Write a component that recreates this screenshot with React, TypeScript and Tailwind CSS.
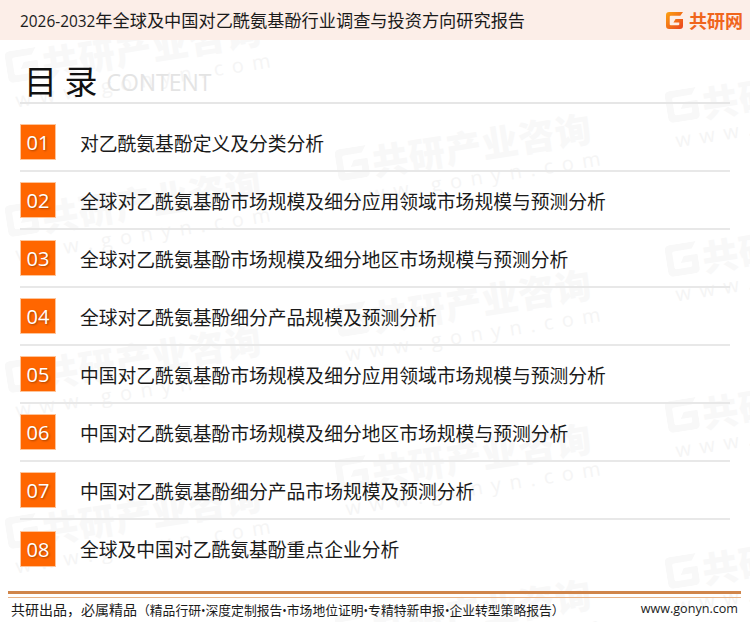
const CJK = "font-['Noto_Sans_CJK_SC','Noto_Sans',sans-serif]";

const items = [
  "对乙酰氨基酚定义及分类分析",
  "全球对乙酰氨基酚市场规模及细分应用领域市场规模与预测分析",
  "全球对乙酰氨基酚市场规模及细分地区市场规模与预测分析",
  "全球对乙酰氨基酚细分产品规模及预测分析",
  "中国对乙酰氨基酚市场规模及细分应用领域市场规模与预测分析",
  "中国对乙酰氨基酚市场规模及细分地区市场规模与预测分析",
  "中国对乙酰氨基酚细分产品市场规模及预测分析",
  "全球及中国对乙酰氨基酚重点企业分析",
];

const marks = [
  [3, 46], [3, 200], [3, 356], [3, 512],
  [333, 144], [333, 300], [333, 454], [333, 610],
  [663, 86], [663, 240], [663, 396], [663, 552],
];

const G_PATH =
  "M3 0H16L13.5 3.5H4.5Q3.5 3.5 3.5 4.5V11.5Q3.5 12.5 4.5 12.5H11.5Q12.5 12.5 12.5 11.5V9.8H7L9 6.5H16V13Q16 16 13 16H3Q0 16 0 13V3Q0 0 3 0Z";

function Watermark({ x, y }: { x: number; y: number }) {
  return (
    <div className="absolute w-[280px] origin-top-left rotate-[-9deg]" style={{ left: x, top: y }}>
      <div className="flex items-center gap-[4px]">
        <svg width="32" height="32" viewBox="0 0 16 16" className="shrink-0">
          <path d={G_PATH} fill="#f8f8f8" />
        </svg>
        <span className="whitespace-nowrap text-[36px] font-black leading-[44px] tracking-[1px] text-[#f8f8f8]">共研产业咨询</span>
      </div>
      <div className="whitespace-nowrap pl-1 font-['Open_Sans',sans-serif] text-[20px] leading-6 tracking-[8.6px] text-[#f5f5f5]">www.gonyn.com</div>
    </div>
  );
}

function Dot() {
  return <span className="font-['Open_Sans',sans-serif] text-[12px]">•</span>;
}

export default function App() {
  return (
    <div className={`relative h-[622px] w-[750px] overflow-hidden bg-white ${CJK}`}>
      {marks.map(([x, y]) => (
        <Watermark key={`${x}-${y}`} x={x} y={y} />
      ))}

      <div className="relative flex h-full flex-col">
        <header className="flex h-10 items-center justify-between bg-[#fceee8] pl-5 pr-[7px]">
          <h1 className="whitespace-nowrap text-[17.2px] font-normal text-[#1a1a1a]">
            <span className="font-['Open_Sans',sans-serif] text-[15.4px]">2026-2032</span>年全球及中国对乙酰氨基酚行业调查与投资方向研究报告
          </h1>
          <div className="flex items-center gap-[6px]">
            <svg width="17" height="17" viewBox="0 0 16 16">
              <defs>
                <linearGradient id="g" x1="0" y1="0" x2="1" y2="1">
                  <stop offset="0" stopColor="#fca311" />
                  <stop offset="1" stopColor="#e9411f" />
                </linearGradient>
              </defs>
              <path d={G_PATH} fill="url(#g)" />
            </svg>
            <span className="text-[18px] font-bold leading-none text-[#f0651c]">共研网</span>
          </div>
        </header>

        <div className="mx-5 flex h-[64px] items-end border-b-2 border-[#e6e6e6]">
          <span className="ml-[4px] h-[44px] text-[33px] leading-[44px] text-[#111]">目 录</span>
          <span className="ml-[9px] h-[36px] font-['Open_Sans',sans-serif] text-[23px] leading-[32px] text-[#e4e4e4]">CONTENT</span>
        </div>

        <ul className="mx-5">
          {items.map((t, i) => (
            <li key={t} className={`flex items-center border-b-2 border-[#e8e8e8] last:border-b-0 ${i === 0 ? "h-[68px] pt-[9px]" : "h-[58px]"}`}>
              <span className="flex h-9 w-9 items-center justify-center border border-[#fdc49a] bg-[#ff6600] pt-[2px] font-['Open_Sans',sans-serif] text-[20px] text-white [text-shadow:1px_1px_2px_#a84300]">
                {String(i + 1).padStart(2, "0")}
              </span>
              <span className={`ml-6 whitespace-nowrap text-[18.8px] text-[#1a1a1a] ${i === 7 ? "" : "pt-[3px]"}`}>{t}</span>
            </li>
          ))}
        </ul>

        <footer className="absolute inset-x-0 top-[591px]">
          <div className="mx-2 h-[7px] w-[733px] border-b border-[#e8b487] before:block before:h-[3px] before:bg-[#d0854a] before:content-['']" />
          <div className="flex h-[23px] items-center justify-between pl-[11px] pr-[12px] text-[#1a1a1a]">
            <p className="whitespace-nowrap text-[14px]">
              共研出品，必属精品
              <span className="text-[12.8px]">
                （精品行研<Dot />深度定制报告<Dot />市场地位证明<Dot />专精特新申报<Dot />企业转型策略报告）
              </span>
            </p>
            <span className="font-['Open_Sans',sans-serif] text-[12.6px]">www.gonyn.com</span>
          </div>
        </footer>
      </div>
    </div>
  );
}
